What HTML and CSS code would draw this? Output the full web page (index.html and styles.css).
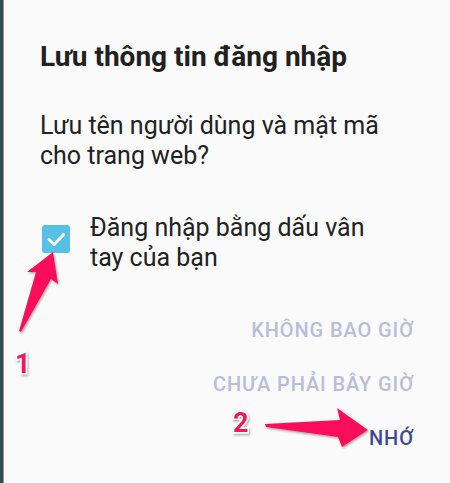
FILE: index.html
```html
<!DOCTYPE html>
<html lang="vi">
<head>
<meta charset="utf-8">
<title>Lưu thông tin đăng nhập</title>
<link rel="stylesheet" href="styles.css">
</head>
<body>
<div class="screen">
  <div class="edge"></div>
  <div class="dialog">
    <h1 class="title">Lưu thông tin đăng nhập</h1>
    <p class="message">Lưu tên người dùng và mật mã<br>cho trang web?</p>
    <div class="check-row">
      <span class="checkbox">
        <svg viewBox="0 0 28 28" width="28" height="28"><path d="M7 14.5 L12 19.5 L21.5 9.5" fill="none" stroke="#fff" stroke-width="3" stroke-linecap="round" stroke-linejoin="round"/></svg>
      </span>
      <span class="check-label">Đăng nhập bằng dấu vân<br>tay của bạn</span>
    </div>
    <div class="actions">
      <button class="btn btn-muted">KHÔNG BAO GIỜ</button>
      <button class="btn btn-muted">CHƯA PHẢI BÂY GIỜ</button>
      <button class="btn btn-primary">NHỚ</button>
    </div>
  </div>
  <svg class="annotations" viewBox="0 0 450 483" width="450" height="483">
    <defs>
      <filter id="sh" x="-20%" y="-20%" width="140%" height="140%">
        <feDropShadow dx="1" dy="1.5" stdDeviation="1" flood-color="#000" flood-opacity="0.35"/>
      </filter>
    </defs>
    <polygon filter="url(#sh)" fill="#fb0d5c" points="53,252 58,284 51,279 21,332 19,331 36,272 27,272"/>
    <polygon filter="url(#sh)" fill="#fb0d5c" points="368,430 342,447 338,437 266,427 265,424 340,420 337,408"/>
    <text class="num" x="15" y="373">1</text>
    <text class="num" x="233" y="432">2</text>
  </svg>
</div>
</body>
</html>
```
FILE: styles.css
```css
html, body {
  margin: 0;
  padding: 0;
}
body {
  background: #fafafa;
  font-family: Roboto, "Noto Sans", "Liberation Sans", sans-serif;
}
.screen {
  position: relative;
  width: 450px;
  height: 483px;
  display: flex;
  overflow: hidden;
}
.edge {
  width: 3px;
  flex: none;
  background: #3a4852;
  border-right: 1px solid #8d969c;
}
.dialog {
  flex: 1;
  background: #fafafa;
  padding: 40px 36px 0 36px;
  display: flex;
  flex-direction: column;
}
.title {
  margin: 0;
  font-size: 28px;
  line-height: 33px;
  font-weight: 700;
  color: #212121;
}
.message {
  margin: 38px 0 0;
  font-size: 25px;
  line-height: 30px;
  color: #212121;
}
.check-row {
  margin-top: 42px;
  display: flex;
  align-items: flex-start;
}
.checkbox {
  flex: none;
  width: 28px;
  height: 28px;
  margin: 12px 0 0 2px;
  background: #56c0e6;
  border-radius: 3px;
  display: flex;
}
.check-label {
  margin-left: 20px;
  font-size: 25px;
  line-height: 30px;
  color: #212121;
}
.actions {
  margin-top: 30px;
  display: flex;
  flex-direction: column;
  align-items: flex-end;
}
.btn {
  border: 0;
  background: none;
  padding: 0;
  height: 54px;
  line-height: 54px;
  font-family: Roboto, "Noto Sans", "Liberation Sans", sans-serif;
  font-size: 20px;
  font-weight: 500;
  letter-spacing: 0.9px;
}
.btn-muted {
  color: #b9bddb;
}
.btn-primary {
  color: #3e4a92;
}
.annotations {
  position: absolute;
  left: 0;
  top: 0;
  pointer-events: none;
}
.num {
  font-family: Roboto, "Liberation Sans", sans-serif;
  font-weight: 700;
  font-size: 27px;
  fill: #f3125a;
  stroke: #fff;
  stroke-width: 3px;
  paint-order: stroke;
  filter: url(#sh);
}
```
